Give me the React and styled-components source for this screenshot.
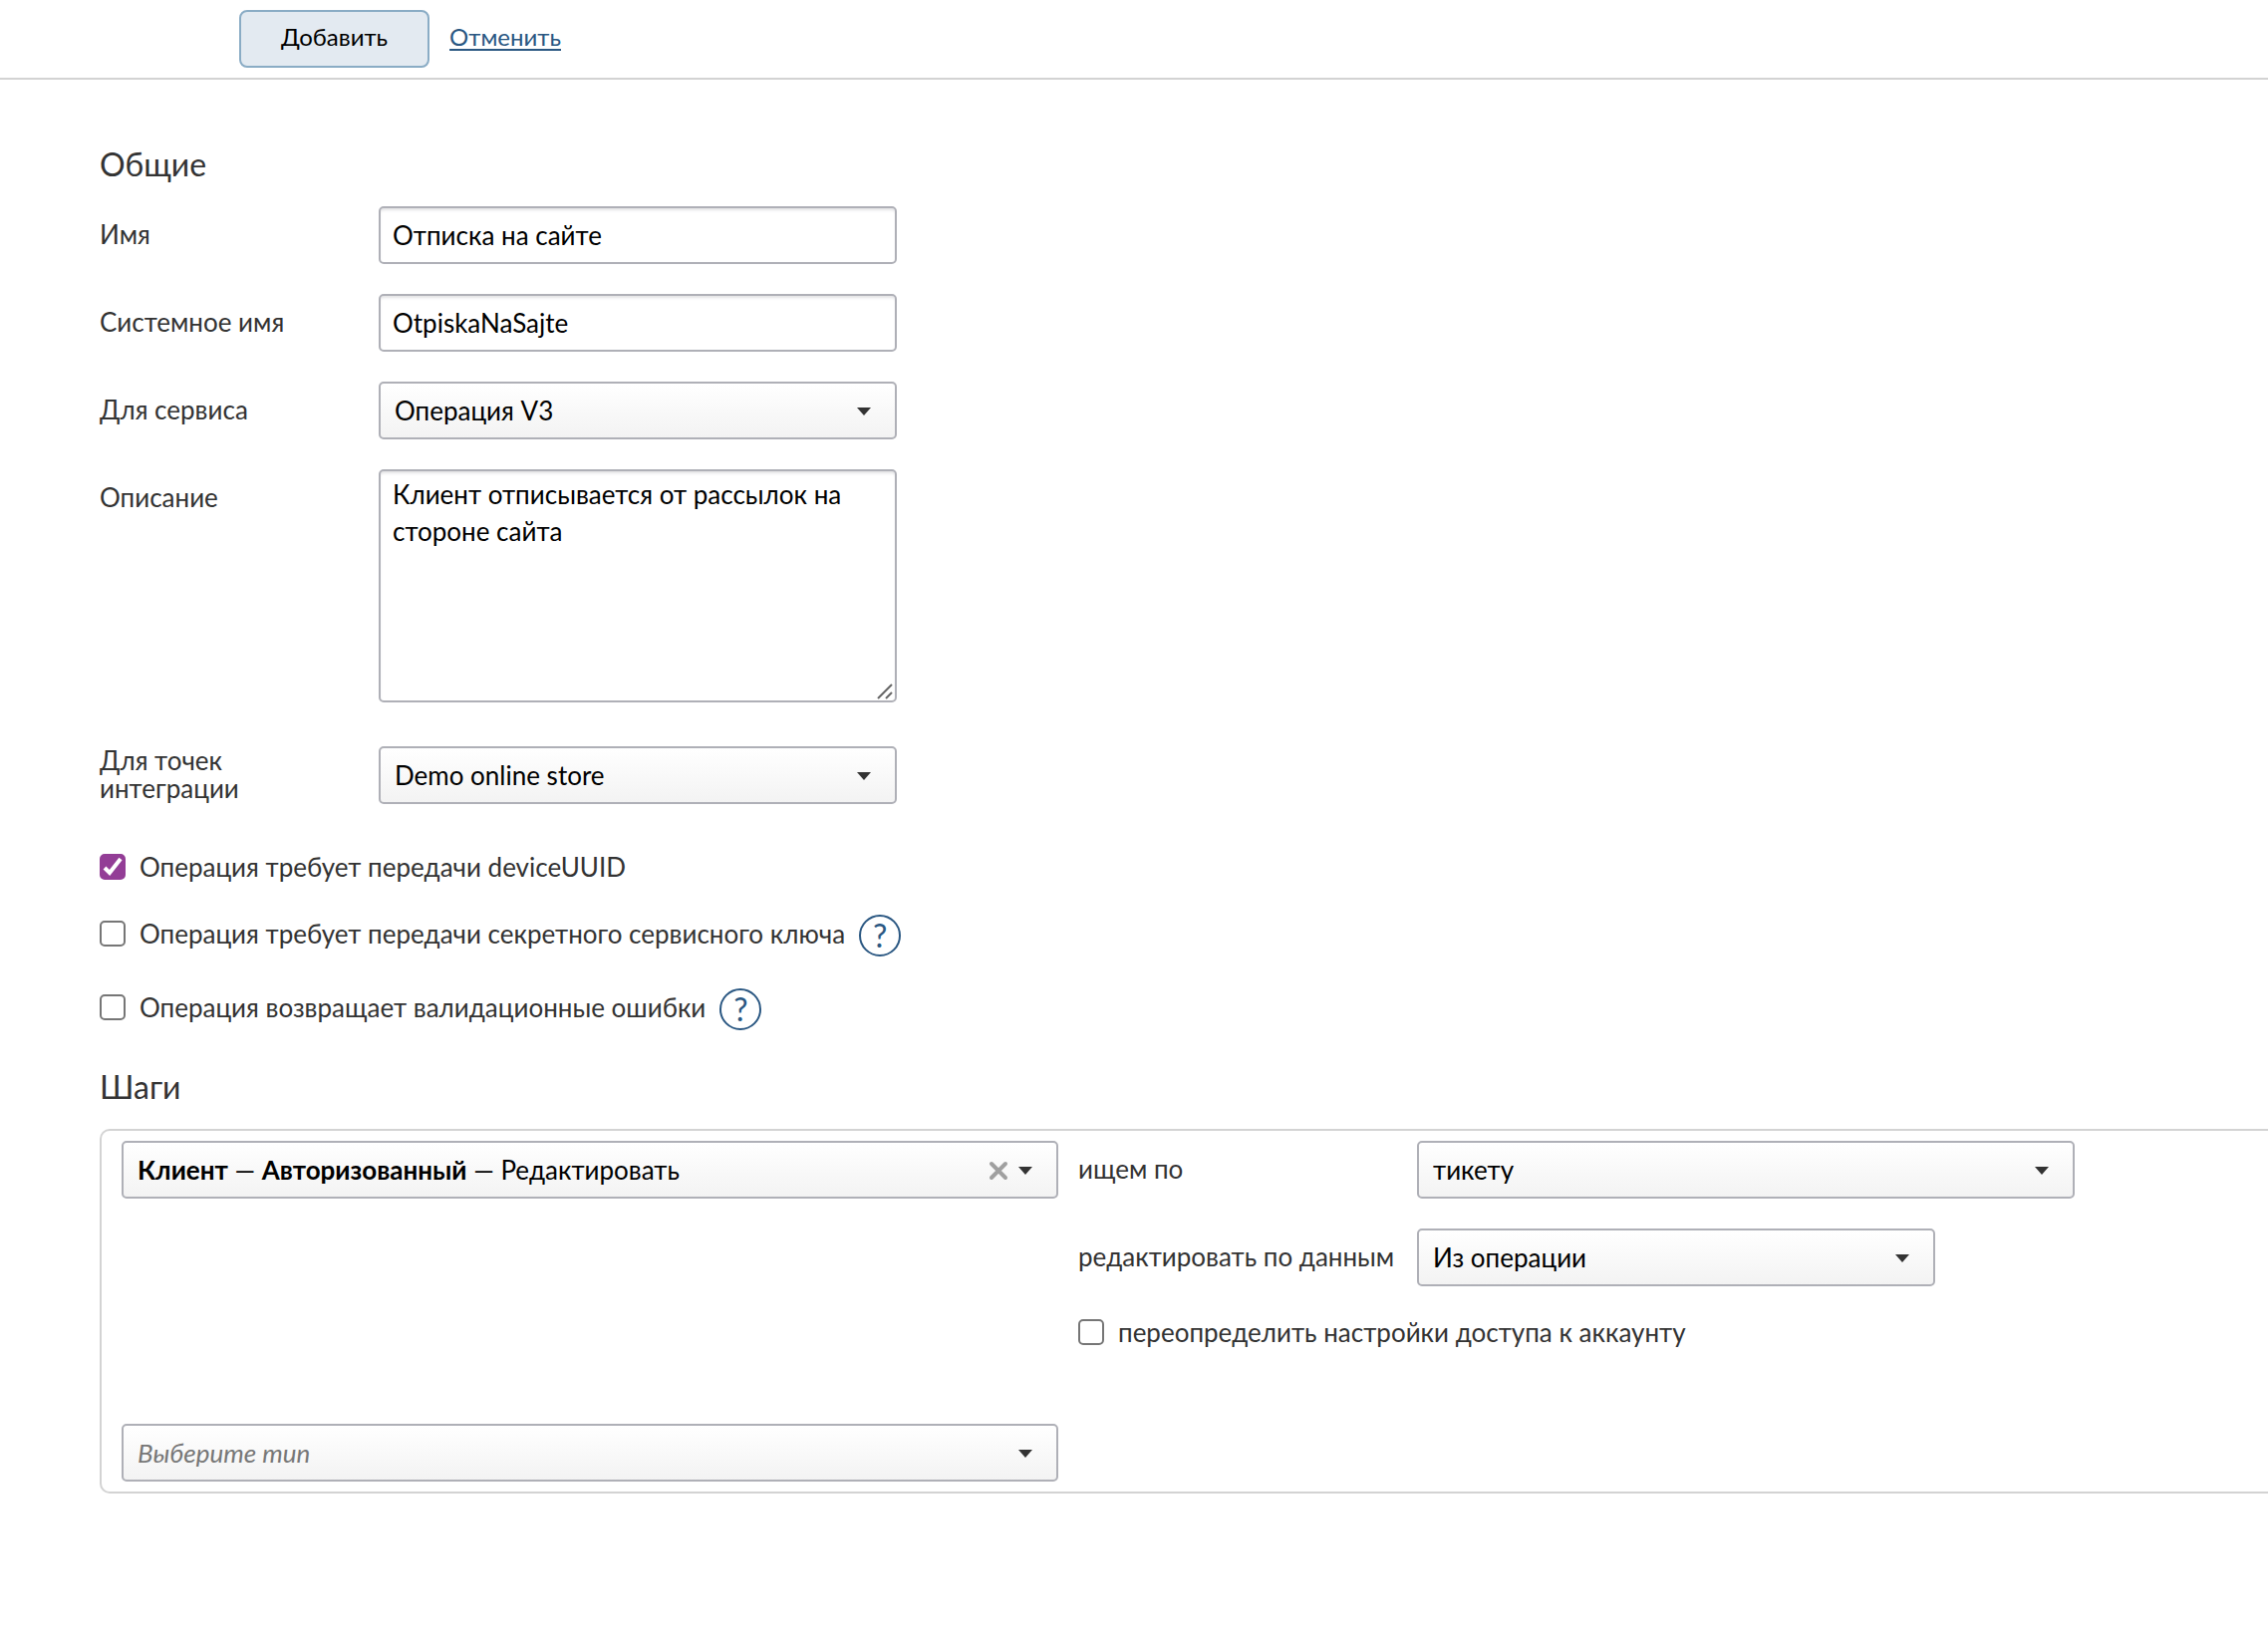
import React, { useState } from 'react'
import styled, { createGlobalStyle } from 'styled-components'

const GlobalStyle = createGlobalStyle`
  * {
    box-sizing: border-box;
  }

  body {
    margin: 0;
    background: #fff;
    color: #333;
    font-family: Lato, 'Open Sans', sans-serif;
    font-size: 26px;
    line-height: 28px;
  }

  button, input, select, textarea {
    font: inherit;
    color: #000;
  }
`

const Toolbar = styled.header`
  display: flex;
  align-items: center;
  gap: 20px;
  height: 80px;
  padding-left: 240px;
  border-bottom: 2px solid #d3d3d3;
  font-size: 24px;
`

const SubmitButton = styled.button`
  height: 58px;
  padding: 0 40px 4px;
  border: 2px solid #8aacc5;
  border-radius: 8px;
  background: #e3eaf1;
  cursor: pointer;
`

const CancelLink = styled.a`
  padding-bottom: 4px;
  color: #2a5782;
  text-decoration: underline;
  text-decoration-thickness: 2px;
  text-underline-offset: 3px;
`

const Content = styled.main`
  padding: 63px 0 140px 100px;
`

const Title = styled.h2`
  margin: 0 0 20px;
  font-size: 32px;
  font-weight: 400;
  line-height: 44px;
`

const Fields = styled.div`
  display: grid;
  grid-template-columns: 280px minmax(0, 520px);
  row-gap: 30px;
`

const FieldLabel = styled.label`
  display: flex;
  align-items: center;
  height: 58px;
  padding: 0 80px 2px 0;
`

const StepLabel = styled(FieldLabel)`
  padding-right: 0;
  white-space: nowrap;
`

const boxBorder = `
  border: 2px solid #afb0b7;
  border-radius: 5px;
`

const TextInput = styled.input`
  ${boxBorder}
  width: 100%;
  height: 58px;
  padding: 0 12px;
  background: #fff;
  box-shadow: inset 0 3px 3px -1px #e2e2e4;
`

const TextAreaBox = styled.div`
  position: relative;
  height: 234px;
  margin-bottom: 14px;

  svg {
    position: absolute;
    right: 4px;
    bottom: 3px;
    pointer-events: none;
  }
`

const TextArea = styled.textarea`
  ${boxBorder}
  display: block;
  width: 100%;
  height: 100%;
  padding: 5px 12px;
  line-height: 37px;
  background: #fff;
  box-shadow: inset 0 3px 3px -1px #e2e2e4;
  resize: none;
`

const SelectBox = styled.div`
  position: relative;
  width: 100%;
  max-width: ${p => p.$width}px;

  > svg {
    position: absolute;
    top: 25px;
    right: 25px;
    pointer-events: none;
  }
`

const NativeSelect = styled.select`
  ${boxBorder}
  appearance: none;
  display: block;
  width: 100%;
  height: 58px;
  padding: 0 50px 0 14px;
  background: linear-gradient(#fff, #f3f3f3);
  color: ${p => (p.$placeholder ? '#777' : '#000')};
  font-style: ${p => (p.$placeholder ? 'italic' : 'normal')};
`

const ComboButton = styled.button`
  ${boxBorder}
  display: block;
  width: 100%;
  height: 58px;
  padding: 0 80px 0 14px;
  background: linear-gradient(#fff, #f3f3f3);
  text-align: left;
  white-space: nowrap;
  overflow: hidden;
`

const ClearButton = styled.button`
  position: absolute;
  top: 20px;
  right: 50px;
  width: 20px;
  height: 20px;
  padding: 0;
  border: 0;
  background: none;
  cursor: pointer;

  svg {
    display: block;
  }
`

const Checks = styled.div`
  display: flex;
  flex-direction: column;
  gap: 32px;
  margin: 47px 0 35px;
`

const CheckRow = styled.div`
  display: flex;
  align-items: flex-start;
  gap: 14px;
`

const CheckLabel = styled.label`
  display: flex;
  align-items: center;
  gap: 14px;
  min-height: ${p => (p.$hint ? 38 : 32)}px;
`

const CheckMark = styled.span`
  position: relative;
  width: 26px;
  height: 26px;

  svg {
    position: absolute;
    inset: 0;
    pointer-events: none;
  }
`

const CheckInput = styled.input`
  appearance: none;
  display: block;
  width: 26px;
  height: 26px;
  margin: 0;
  border: 2px solid #767676;
  border-radius: 5px;
  background: #fff;

  &:checked {
    border-color: #933d96;
    background: #933d96;
  }
`

const HelpButton = styled.button`
  width: 42px;
  height: 42px;
  padding: 0;
  border: 2px solid #2a5782;
  border-radius: 50%;
  background: #fff;
  color: #2a5782;
  font-size: 32px;
  cursor: pointer;
`

const StepsPanel = styled.section`
  padding: 10px 0 10px 20px;
  border: 2px solid #d3d3d3;
  border-right: 0;
  border-radius: 10px 0 0 10px;
`

const Step = styled.div`
  display: grid;
  grid-template-columns: 940px 1fr;
  column-gap: 20px;
  margin-bottom: 76px;
`

const StepParams = styled.div`
  display: grid;
  grid-template-columns: 340px 1fr;
  row-gap: 30px;
`

const WideCell = styled.div`
  grid-column: 1 / -1;
`

const Arrow = () => (
  <svg width="16" height="10" viewBox="0 0 16 10" aria-hidden="true">
    <path d="M1 1h14L8 9z" fill="#333" />
  </svg>
)

const Cross = () => (
  <svg width="20" height="20" viewBox="0 0 20 20" aria-hidden="true">
    <path d="M3 3l14 14M17 3L3 17" stroke="#a0a0a0" strokeWidth="4" strokeLinecap="round" />
  </svg>
)

const ResizeGrip = () => (
  <svg width="16" height="16" viewBox="0 0 16 16" aria-hidden="true">
    <path d="M1 15L15 1M9 15l6-6" stroke="#666" strokeWidth="2" />
  </svg>
)

const Select = ({ id, label, width, options, placeholder }) => (
  <SelectBox $width={width}>
    <NativeSelect id={id} aria-label={label} $placeholder={placeholder}>
      {options.map(o => <option key={o}>{o}</option>)}
    </NativeSelect>
    <Arrow />
  </SelectBox>
)

const Check = ({ label, hint, initial = false }) => {
  const [checked, setChecked] = useState(initial)
  return (
    <CheckRow>
      <CheckLabel $hint={hint}>
        <CheckMark>
          <CheckInput type="checkbox" checked={checked} onChange={e => setChecked(e.target.checked)} />
          {checked && (
            <svg width="26" height="26" viewBox="0 0 26 26" fill="none" aria-hidden="true">
              <path d="M5 14l5 5L21 5" stroke="#fff" strokeWidth="4" />
            </svg>
          )}
        </CheckMark>
        {label}
      </CheckLabel>
      {hint && <HelpButton type="button">?</HelpButton>}
    </CheckRow>
  )
}

export default function App() {
  return (
    <form onSubmit={e => e.preventDefault()}>
      <GlobalStyle />
      <Toolbar>
        <SubmitButton type="submit">Добавить</SubmitButton>
        <CancelLink href="#">Отменить</CancelLink>
      </Toolbar>

      <Content>
        <Title>Общие</Title>
        <Fields>
          <FieldLabel htmlFor="name">Имя</FieldLabel>
          <TextInput id="name" defaultValue="Отписка на сайте" />

          <FieldLabel htmlFor="systemName">Системное имя</FieldLabel>
          <TextInput id="systemName" defaultValue="OtpiskaNaSajte" />

          <FieldLabel htmlFor="service">Для сервиса</FieldLabel>
          <Select id="service" width={520} options={['Операция V3']} />

          <FieldLabel htmlFor="description">Описание</FieldLabel>
          <TextAreaBox>
            <TextArea
              id="description"
              spellCheck={false}
              defaultValue="Клиент отписывается от рассылок на стороне сайта"
            />
            <ResizeGrip />
          </TextAreaBox>

          <FieldLabel htmlFor="points">Для точек интеграции</FieldLabel>
          <Select id="points" width={520} options={['Demo online store']} />
        </Fields>

        <Checks>
          <Check label="Операция требует передачи deviceUUID" initial />
          <Check label="Операция требует передачи секретного сервисного ключа" hint />
          <Check label="Операция возвращает валидационные ошибки" hint />
        </Checks>

        <Title>Шаги</Title>
        <StepsPanel>
          <Step>
            <SelectBox $width={940}>
              <ComboButton type="button" aria-haspopup="listbox">
                <b>Клиент</b> — <b>Авторизованный</b> — Редактировать
              </ComboButton>
              <ClearButton type="button" aria-label="Очистить">
                <Cross />
              </ClearButton>
              <Arrow />
            </SelectBox>
            <StepParams>
              <StepLabel htmlFor="searchBy">ищем по</StepLabel>
              <Select id="searchBy" width={660} options={['тикету']} />

              <StepLabel htmlFor="editBy">редактировать по данным</StepLabel>
              <Select id="editBy" width={520} options={['Из операции']} />

              <WideCell>
                <Check label="переопределить настройки доступа к аккаунту" />
              </WideCell>
            </StepParams>
          </Step>
          <Select label="Тип шага" width={940} options={['Выберите тип']} placeholder />
        </StepsPanel>
      </Content>
    </form>
  )
}
